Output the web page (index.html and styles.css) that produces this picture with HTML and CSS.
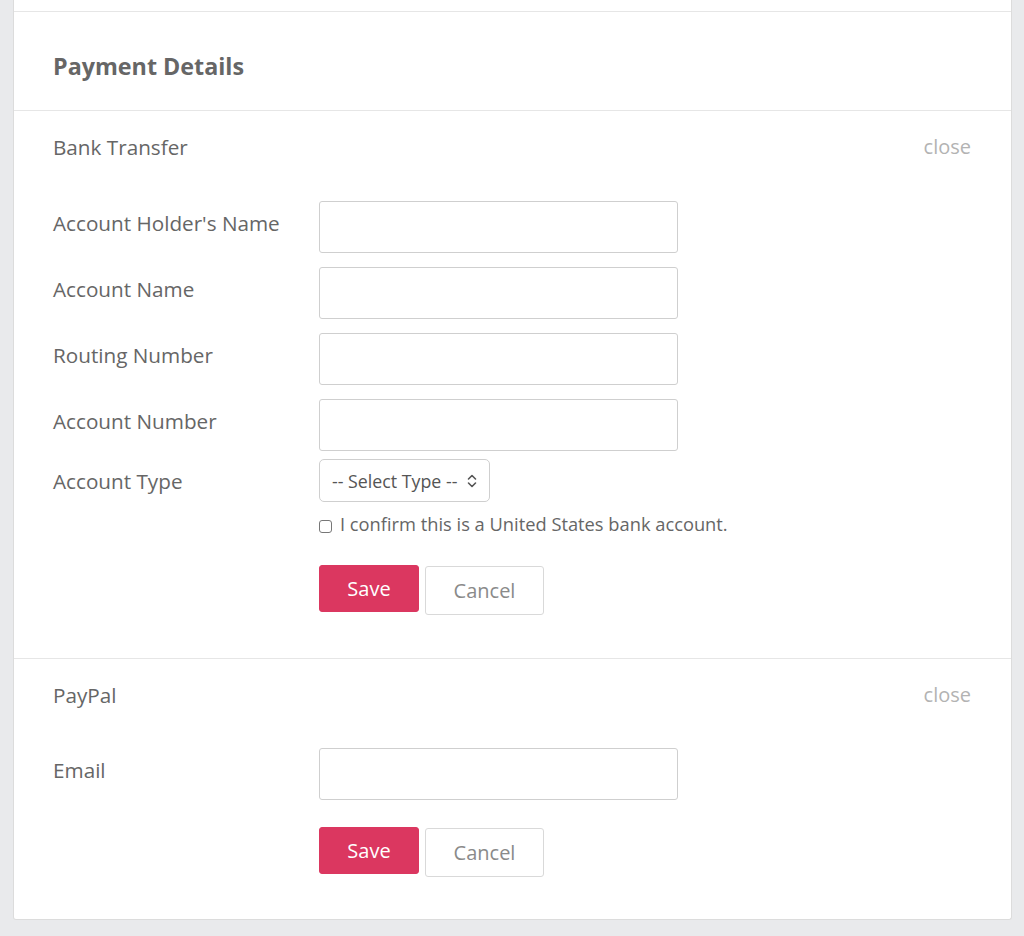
FILE: index.html
```html
<!DOCTYPE html>
<html lang="en">
<head>
<meta charset="utf-8">
<title>Payment Details</title>
<link rel="stylesheet" href="styles.css">
</head>
<body>
<div class="card">
  <div class="stub"></div>
  <div class="card-header">Payment Details</div>

  <section class="method">
    <div class="method-head">
      <span class="method-title">Bank Transfer</span>
      <a class="close" href="#">close</a>
    </div>
    <form class="form">
      <div class="row">
        <label class="label">Account Holder's Name</label>
        <input class="input" type="text">
      </div>
      <div class="row">
        <label class="label">Account Name</label>
        <input class="input" type="text">
      </div>
      <div class="row">
        <label class="label">Routing Number</label>
        <input class="input" type="text">
      </div>
      <div class="row">
        <label class="label">Account Number</label>
        <input class="input" type="text">
      </div>
      <div class="row row-select">
        <label class="label label-mid">Account Type</label>
        <div class="select">
          <span>-- Select Type --</span>
          <svg class="chev" width="10" height="14" viewBox="0 0 10 14"><path d="M1.5 5 L5 1.5 L8.5 5 M1.5 9 L5 12.5 L8.5 9" fill="none" stroke="#555" stroke-width="1.6" stroke-linecap="round" stroke-linejoin="round"/></svg>
        </div>
      </div>
      <div class="row-offset check-row">
        <span class="checkbox"></span>
        <span>I confirm this is a United States bank account.</span>
      </div>
      <div class="row-offset actions">
        <button class="btn btn-save" type="button">Save</button>
        <button class="btn btn-cancel" type="button">Cancel</button>
      </div>
    </form>
  </section>

  <section class="method last">
    <div class="method-head">
      <span class="method-title">PayPal</span>
      <a class="close" href="#">close</a>
    </div>
    <form class="form form-tight">
      <div class="row">
        <label class="label">Email</label>
        <input class="input" type="text">
      </div>
      <div class="row-offset actions">
        <button class="btn btn-save" type="button">Save</button>
        <button class="btn btn-cancel" type="button">Cancel</button>
      </div>
    </form>
  </section>
</div>
</body>
</html>
```

FILE: styles.css
```css
html, body {
  margin: 0;
  padding: 0;
  background: #e9eaec;
  height: 936px;
  overflow: hidden;
}
body {
  font-family: "Open Sans", "Liberation Sans", sans-serif;
  color: #666;
}
.card {
  margin-left: 13px;
  width: 997px;
  background: #fff;
  border: 1px solid #dcdcdc;
  border-top: none;
  border-radius: 0 0 3px 3px;
}
.stub {
  height: 11px;
  border-bottom: 1px solid #e6e6e6;
}
.card-header {
  padding: 40px 39px 30px;
  font-size: 23.3px;
  line-height: 28px;
  font-weight: 700;
  color: #666;
  border-bottom: 1px solid #e6e6e6;
}
.method {
  padding: 23px 40px 43px 39px;
  border-bottom: 1px solid #e6e6e6;
}
.method.last {
  border-bottom: none;
  padding-bottom: 42px;
}
.method-head {
  display: flex;
  justify-content: space-between;
  align-items: center;
  height: 26px;
  font-size: 20.7px;
  line-height: 26px;
}
.method-title {
  color: #666;
}
.close {
  color: #b3b3b3;
  text-decoration: none;
  font-size: 20px;
}
.form {
  margin-top: 41px;
}
.form.form-tight {
  margin-top: 40px;
}
.row {
  display: grid;
  grid-template-columns: 266px 359px;
  align-items: start;
}
.row + .row {
  margin-top: 14px;
}
.row.row-select {
  margin-top: 8px;
  align-items: center;
}
.label {
  font-size: 20.7px;
  line-height: 26px;
  padding-top: 9px;
  color: #666;
}
.label.label-mid {
  padding-top: 0;
}
.input {
  box-sizing: border-box;
  width: 359px;
  height: 52px;
  margin: 0;
  border: 1px solid #cfcfcf;
  border-radius: 3px;
  background: #fff;
  font: inherit;
}
.select {
  box-sizing: border-box;
  width: 171px;
  height: 43px;
  border: 1px solid #cfcfcf;
  border-radius: 5px;
  display: flex;
  align-items: center;
  justify-content: space-between;
  padding: 0 12px 0 12px;
  font-size: 17.8px;
  color: #555;
}
.chev {
  display: block;
}
.row-offset {
  margin-left: 266px;
}
.check-row {
  margin-top: 9px;
  display: flex;
  align-items: center;
  gap: 8px;
  font-size: 18.3px;
  line-height: 26px;
  color: #666;
}
.checkbox {
  width: 11px;
  height: 11px;
  border: 1px solid #777;
  border-radius: 3px;
  margin-top: 4px;
}
.actions {
  margin-top: 28px;
  display: flex;
  align-items: flex-start;
  gap: 6px;
}
.form-tight .actions {
  margin-top: 27px;
}
.btn {
  font-family: inherit;
  font-size: 20px;
  box-sizing: border-box;
  border-radius: 3px;
  margin: 0;
  padding: 0;
  cursor: pointer;
}
.btn-save {
  width: 100px;
  height: 47px;
  background: #db3760;
  border: 1px solid #db3760;
  color: #fff;
}
.btn-cancel {
  width: 119px;
  height: 49px;
  margin-top: 1px;
  background: #fff;
  border: 1px solid #d9d9d9;
  color: #8a8a8a;
}
```
